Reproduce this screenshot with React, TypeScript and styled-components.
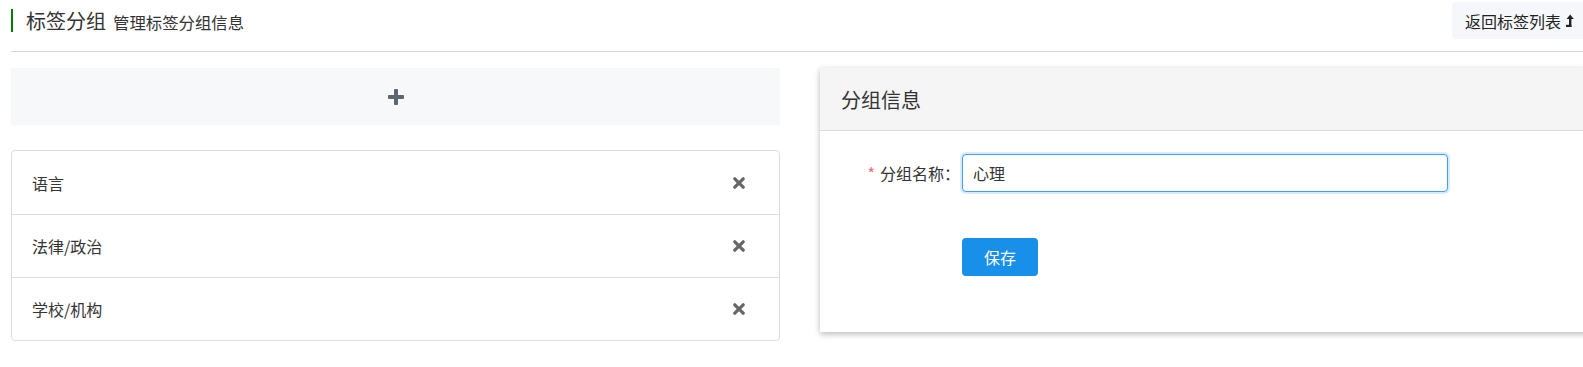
import styled, { createGlobalStyle } from "styled-components";

const GlobalStyle = createGlobalStyle`
  html, body {
    margin: 0;
    padding: 0;
    overflow: hidden;
    background: #fff;
  }

  body {
    font-family: "Noto Sans CJK SC", "Noto Sans", sans-serif;
    color: #333;
  }

  * {
    box-sizing: border-box;
  }
`;

const Page = styled.div`
  width: 1600px;
  padding: 0 11px;
`;

const Header = styled.header`
  display: flex;
  align-items: center;
  justify-content: space-between;
  height: 52px;
  padding-bottom: 10px;
  border-bottom: 1px solid #d4d4d4;
`;

const TitleGroup = styled.div`
  display: flex;
  align-items: baseline;
  border-left: 2px solid #008000;
  height: 23px;
  padding-left: 13px;
`;

const Title = styled.h1`
  margin: 0;
  font-size: 20px;
  line-height: 23px;
  font-weight: 400;
  color: #333;
`;

const SubTitle = styled.small`
  margin-left: 7px;
  font-size: 16.4px;
  color: #333;
`;

const BackButton = styled.button`
  display: flex;
  align-items: center;
  gap: 5px;
  height: 37px;
  padding: 0 15px 0 13px;
  border: 0;
  border-radius: 4px;
  background: #f5f7fa;
  color: #222;
  font-family: inherit;
  font-size: 16px;
  cursor: pointer;

  svg {
    display: block;
  }
`;

const Columns = styled.div`
  display: grid;
  grid-template-columns: 769px 769px;
  column-gap: 40px;
  align-items: start;
  margin-top: 16px;
`;

const AddBox = styled.button`
  display: flex;
  align-items: center;
  justify-content: center;
  width: 100%;
  height: 57px;
  border: 0;
  background: #f7f8fa;
  cursor: pointer;

  svg {
    display: block;
  }
`;

const GroupList = styled.ul`
  list-style: none;
  margin: 25px 0 0;
  padding: 0;
  border: 1px solid #ddd;
  border-radius: 4px;
`;

const GroupItem = styled.li`
  display: flex;
  align-items: center;
  justify-content: space-between;
  height: 63px;
  padding: 0 34px 0 20px;
  font-size: 16px;
  color: #333;

  & + & {
    border-top: 1px solid #ddd;
  }

  svg {
    display: block;
  }
`;

const Panel = styled.section`
  background: #fff;
  box-shadow: 0 2px 6px rgba(0, 0, 0, 0.28);
`;

const PanelHeader = styled.div`
  display: flex;
  align-items: center;
  height: 63px;
  padding-left: 21px;
  background: #f5f5f5;
  border-bottom: 1px solid #ddd;
  font-size: 20px;
  color: #333;
`;

const PanelBody = styled.div`
  padding: 23px 0 56px;
`;

const FormRow = styled.div<{ offset?: boolean }>`
  display: grid;
  grid-template-columns: 142px 1fr;
  align-items: center;
  margin-top: ${(p) => (p.offset ? "46px" : "0")};
`;

const Label = styled.label`
  padding-right: 2px;
  text-align: right;
  font-size: 16px;
  color: #333;
`;

const Required = styled.span`
  margin-right: 5px;
  color: #f56c6c;
`;

const TextInput = styled.input`
  width: 486px;
  height: 38px;
  padding: 0 10px;
  border: 1px solid #409eff;
  border-radius: 4px;
  box-shadow: 0 0 0 2px rgba(64, 158, 255, 0.2);
  outline: none;
  font-family: inherit;
  font-size: 16px;
  color: #333;
`;

const SaveButton = styled.button`
  width: 76px;
  height: 38px;
  border: 0;
  border-radius: 4px;
  background: #1890ea;
  color: #fff;
  font-family: inherit;
  font-size: 16px;
  cursor: pointer;
`;

const PlusIcon = () => (
  <svg width="16" height="16" viewBox="0 0 16 16">
    <rect x="6" y="0" width="4" height="16" rx="1" fill="#5c6670" />
    <rect x="0" y="6" width="16" height="4" rx="1" fill="#5c6670" />
  </svg>
);

const CloseIcon = () => (
  <svg width="12" height="12" viewBox="0 0 12 12">
    <path
      d="M1.8 1.8 L10.2 10.2 M10.2 1.8 L1.8 10.2"
      stroke="#666"
      strokeWidth="3.2"
      strokeLinecap="round"
    />
  </svg>
);

const LevelUpIcon = () => (
  <svg width="8" height="13" viewBox="0 0 8 13">
    <path d="M4.2 0.5 L7.8 5 L0.6 5 Z" fill="#222" />
    <rect x="3" y="4" width="2.4" height="9" fill="#222" />
    <rect x="0" y="10.8" width="5.4" height="2.2" fill="#222" />
  </svg>
);

const groups = ["语言", "法律/政治", "学校/机构"];

export default function App() {
  return (
    <>
      <GlobalStyle />
      <Page>
        <Header>
          <TitleGroup>
            <Title>标签分组</Title>
            <SubTitle>管理标签分组信息</SubTitle>
          </TitleGroup>
          <BackButton>
            返回标签列表
            <LevelUpIcon />
          </BackButton>
        </Header>

        <Columns>
          <div>
            <AddBox>
              <PlusIcon />
            </AddBox>
            <GroupList>
              {groups.map((name) => (
                <GroupItem key={name}>
                  {name}
                  <CloseIcon />
                </GroupItem>
              ))}
            </GroupList>
          </div>

          <Panel>
            <PanelHeader>分组信息</PanelHeader>
            <PanelBody>
              <FormRow>
                <Label>
                  <Required>*</Required>分组名称：
                </Label>
                <TextInput defaultValue="心理" />
              </FormRow>
              <FormRow offset>
                <span />
                <SaveButton>保存</SaveButton>
              </FormRow>
            </PanelBody>
          </Panel>
        </Columns>
      </Page>
    </>
  );
}
